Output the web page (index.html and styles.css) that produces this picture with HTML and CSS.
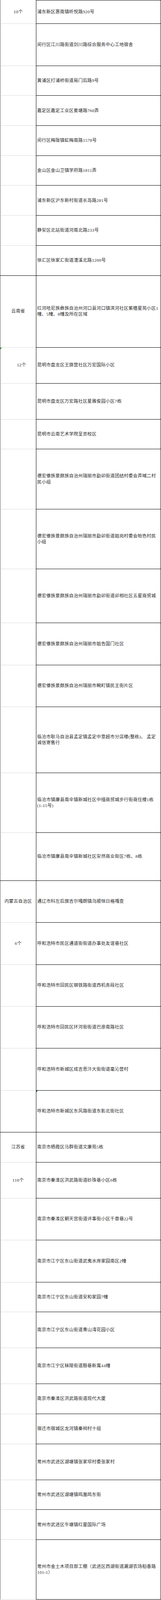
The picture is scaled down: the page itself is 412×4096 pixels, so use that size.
FILE: index.html
```html
<!DOCTYPE html>
<html lang="zh-CN">
<head>
<meta charset="utf-8">
<title>地区列表</title>
<link rel="stylesheet" href="styles.css">
</head>
<body>
<div class="sheet">
  <div class="row first u4"><div class="prov">10个</div><div class="addr">浦东新区惠南镇听悦路920号</div></div>
  <div class="row u7"><div class="prov"></div><div class="addr">闵行区江川路街道剑川路综合服务中心工地宿舍</div></div>
  <div class="row u5"><div class="prov"></div><div class="addr">黄浦区打浦桥街道局门后路9号</div></div>
  <div class="row u5"><div class="prov"></div><div class="addr">嘉定区嘉定工业区娄塘路760弄</div></div>
  <div class="row u5"><div class="prov"></div><div class="addr">闵行区梅陇镇虹梅南路1578号</div></div>
  <div class="row u5"><div class="prov"></div><div class="addr">金山区金山卫镇学府路1811弄</div></div>
  <div class="row u5"><div class="prov"></div><div class="addr">浦东新区沪东新村街道长岛路281号</div></div>
  <div class="row u5"><div class="prov"></div><div class="addr">静安区北站街道河南北路233号</div></div>
  <div class="row end u5"><div class="prov"></div><div class="addr">徐汇区徐家汇街道漕溪北路1200号</div></div>

  <div class="row u12"><div class="prov">云南省</div><div class="addr">红河哈尼族彝族自治州河口县河口镇滨河社区紫檀星苑小区1<br>幢、5幢、8幢及所在区域</div></div>
  <div class="row u6"><div class="prov shift flag">12个</div><div class="addr">昆明市盘龙区王旗营社区万宏国际小区</div></div>
  <div class="row u6"><div class="prov"></div><div class="addr">昆明市盘龙区万宏路社区星雅俊园小区7栋</div></div>
  <div class="row u5"><div class="prov"></div><div class="addr">昆明市云南艺术学院呈贡校区</div></div>
  <div class="row u10"><div class="prov"></div><div class="addr">德宏傣族景颇族自治州瑞丽市勐卯街道团结村委会弄喊二村<br>民小组</div></div>
  <div class="row u10"><div class="prov"></div><div class="addr">德宏傣族景颇族自治州瑞丽市勐卯街道姐岗村委会帕色村民<br>小组</div></div>
  <div class="row u9"><div class="prov"></div><div class="addr">德宏傣族景颇族自治州瑞丽市勐卯街道卯相社区五星商贸城</div></div>
  <div class="row u7"><div class="prov"></div><div class="addr">德宏傣族景颇族自治州瑞丽市姐告国门社区</div></div>
  <div class="row u7"><div class="prov"></div><div class="addr">德宏傣族景颇族自治州瑞丽市畹町镇民主街片区</div></div>
  <div class="row u11"><div class="prov"></div><div class="addr">临沧市耿马自治县孟定镇孟定中意超市分店楼(整栋)、 孟定<br>诚信寄售行</div></div>
  <div class="row u10"><div class="prov"></div><div class="addr">临沧市镇康县南伞镇新城社区中缅商贸城步行街商住楼1栋<br>(1-15号)</div></div>
  <div class="row end u8"><div class="prov"></div><div class="addr">临沧市镇康县南伞镇新城社区安然商业街区7栋、8栋</div></div>

  <div class="row u7"><div class="prov">内蒙古自治区</div><div class="addr">通辽市科左后旗吉尔嘎朗镇乌顺恒日格嘎查</div></div>
  <div class="row u7"><div class="prov">6个</div><div class="addr">呼和浩特市民区通道街街道办事处友谊巷社区</div></div>
  <div class="row u7"><div class="prov"></div><div class="addr">呼和浩特市回民区钢铁路街道西机务段社区</div></div>
  <div class="row u7"><div class="prov"></div><div class="addr">呼和浩特市回民区环河街街道巴彦南路社区</div></div>
  <div class="row u7"><div class="prov"></div><div class="addr">呼和浩特市新城区成吉思汗大街街道毫沁营村</div></div>
  <div class="row end u7"><div class="prov"></div><div class="addr flag">呼和浩特市新城区东风路街道东影北街社区</div></div>

  <div class="row u5"><div class="prov">江苏省</div><div class="addr">南京市栖霞区马群街道文康苑5栋</div></div>
  <div class="row u6"><div class="prov">116个</div><div class="addr">南京市秦淮区洪武路街道砂珠巷小区6栋</div></div>
  <div class="row u7"><div class="prov"></div><div class="addr">南京市秦淮区朝天宫街道评事街小区千章巷22号</div></div>
  <div class="row u7"><div class="prov"></div><div class="addr">南京市江宁区东山街道武夷水岸家园南区2幢</div></div>
  <div class="row u5"><div class="prov"></div><div class="addr">南京市江宁区东山街道安和家园7幢</div></div>
  <div class="row u6"><div class="prov"></div><div class="addr">南京市江宁区东山街道青山湾花园小区</div></div>
  <div class="row u6"><div class="prov"></div><div class="addr">南京市江宁区秣陵街道殷巷新寓44幢</div></div>
  <div class="row u5"><div class="prov"></div><div class="addr">南京市秦淮区洪武路街道现代大厦</div></div>
  <div class="row u5"><div class="prov"></div><div class="addr">宿迁市宿城区龙河镇秦祠村十组</div></div>
  <div class="row u6"><div class="prov"></div><div class="addr">常州市武进区湖塘镇张家坝村委张家村</div></div>
  <div class="row u5"><div class="prov"></div><div class="addr">常州市武进区湖塘镇鸣凰鸣东街</div></div>
  <div class="row u5"><div class="prov"></div><div class="addr">常州市武进区牛塘镇红星国际广场</div></div>
  <div class="row u10"><div class="prov"></div><div class="addr">常州市金土木项目部工棚（武进区西湖街道漏湖农场稻香路<br>101-1）</div></div>
</div>
</body>
</html>
```

FILE: styles.css
```css
html, body {
  margin: 0;
  padding: 0;
  background: #ffffff;
}

.sheet {
  width: 412px;
  font-family: "Liberation Serif", "Noto Sans CJK SC", serif;
  font-size: 11.4px;
  letter-spacing: 0.3px;
  line-height: 15.3px;
  color: #2a2a2a;
}

.row {
  display: grid;
  grid-template-columns: 92px 320px;
}

.u4 { height: 61.36px; }
.u5 { height: 76.70px; }
.u6 { height: 92.04px; }
.u7 { height: 107.38px; }
.u8 { height: 122.72px; }
.u9 { height: 138.06px; }
.u10 { height: 153.40px; }
.u11 { height: 168.74px; }
.u12 { height: 184.08px; }

.prov {
  box-sizing: border-box;
  position: relative;
  display: flex;
  align-items: center;
  justify-content: center;
  border-left: 1px solid #555555;
  border-bottom: 1px solid #dadada;
  white-space: nowrap;
}

.row.end .prov {
  border-bottom-color: #000000;
}

.prov.shift {
  padding-left: 17px;
}

.addr {
  box-sizing: border-box;
  position: relative;
  display: flex;
  align-items: center;
  padding-left: 2px;
  border-left: 1px solid #000000;
  border-right: 1px solid #000000;
  border-bottom: 1px solid #000000;
}

.row.first .addr {
  border-top: 1px solid #000000;
}

.flag::before {
  content: "";
  position: absolute;
  left: 0;
  top: 0;
  width: 0;
  height: 0;
  border-top: 4px solid #1f7a1f;
  border-right: 4px solid transparent;
}
```
